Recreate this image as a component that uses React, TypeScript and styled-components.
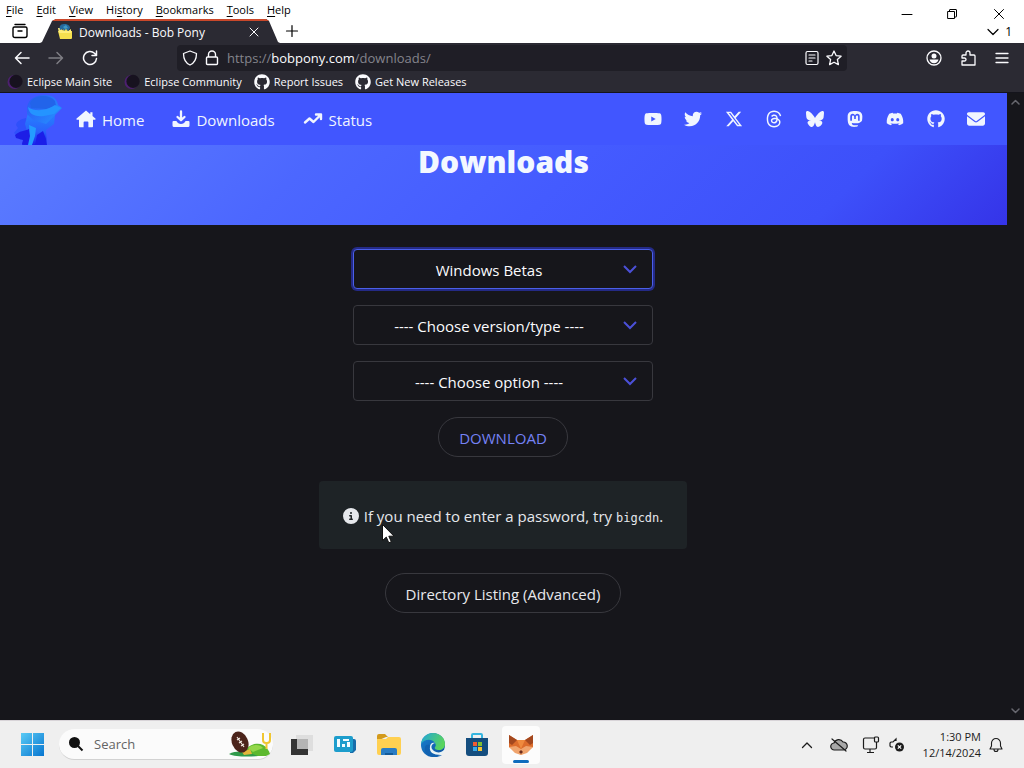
import React from "react";
import styled, { createGlobalStyle } from "styled-components";
import {
  FaYoutube,
  FaTwitter,
  FaXTwitter,
  FaThreads,
  FaBluesky,
  FaMastodon,
  FaDiscord,
  FaGithub,
  FaEnvelope,
  FaCircleInfo,
} from "react-icons/fa6";

const ui = '"Open Sans", "Noto Sans", "Segoe UI", sans-serif';

const GlobalStyle = createGlobalStyle`
  * { box-sizing: border-box; }
  body { margin: 0; background: #16161b; font-family: ${ui}; }
  button, input, select { font: inherit; color: inherit; }
  button { background: none; border: 0; padding: 0; }
  a { color: inherit; text-decoration: none; }
  svg { display: block; flex: none; }
`;

const Desktop = styled.div`
  min-height: 100vh;
  display: flex;
  flex-direction: column;
  color: #fbfbfe;
`;

/* ---------- browser chrome ---------- */

const TitleArea = styled.header`
  display: flex;
  justify-content: space-between;
  height: 43px;
  background: #fff;
  color: #000;
  font-size: 12px;
`;

const MenuBar = styled.nav`
  display: flex;
  gap: 1px;
  height: 19px;
  font-size: 11px;
`;

const MenuItem = styled.button`
  padding: 0 6px;
  line-height: 19px;
  u { text-underline-offset: 2px; }
`;

const TabStrip = styled.div`
  display: flex;
  align-items: center;
  height: 24px;
`;

const StripButton = styled.button<{ $w: number }>`
  width: ${(p) => p.$w}px;
  height: 24px;
  display: flex;
  align-items: center;
  justify-content: center;
`;

const Tab = styled.div`
  width: 240px;
  height: 24px;
  display: flex;
  align-items: center;
  padding: 0 18px 0 17px;
  gap: 6px;
  color: #fbfbfe;
  background: #2b2a33;
  border-top: 2px solid #c9482b;
  clip-path: polygon(0 100%, 2px 96%, 12px 8%, 16px 0, 226px 0, 229px 8%, 238px 96%, 100% 100%);
`;

const TabTitle = styled.span`
  flex: 1;
  white-space: nowrap;
`;

const WindowSide = styled.div`
  display: flex;
  flex-direction: column;
  align-items: flex-end;
`;

const WindowButtons = styled.div`
  display: flex;
`;

const WindowButton = styled.button`
  width: 45px;
  height: 28px;
  display: flex;
  align-items: center;
  justify-content: center;
  &:last-child { width: 50px; }
`;

const TabCount = styled.button`
  display: flex;
  align-items: center;
  gap: 6px;
  padding-right: 12px;
  line-height: 8px;
`;

const Toolbar = styled.div`
  display: flex;
  align-items: center;
  height: 30px;
  padding: 0 5px;
  background: #2b2a33;
`;

const ToolButton = styled.button<{ $dim?: boolean; $w?: number }>`
  width: ${(p) => p.$w ?? 34}px;
  height: 28px;
  display: flex;
  align-items: center;
  justify-content: center;
  opacity: ${(p) => (p.$dim ? 0.4 : 1)};
`;

const NavButtons = styled.div`
  display: flex;
  width: 172px;
`;

const AddressBar = styled.div`
  flex: 1;
  display: flex;
  align-items: center;
  height: 26px;
  padding: 0 2px;
  background: #1f1e26;
  border-radius: 4px;
`;

const AddressLabel = styled.label`
  margin-left: 4px;
  font-size: 13px;
  color: #84848c;
  b { font-weight: 400; color: #fbfbfe; }
`;

const AddressInput = styled.input`
  flex: 1;
  min-width: 0;
  border: 0;
  outline: 0;
  background: transparent;
`;

const ToolbarEnd = styled.div`
  display: flex;
  margin-left: 70px;
`;

const Bookmarks = styled.nav`
  display: flex;
  align-items: center;
  gap: 12px;
  height: 20px;
  padding: 0 7px 2px;
  background: #2b2a33;
  border-bottom: 1px solid #14141c;
  font-size: 11px;
`;

const Bookmark = styled.a`
  display: flex;
  align-items: center;
  gap: 4px;
  white-space: nowrap;
`;

/* ---------- web page ---------- */

const Viewport = styled.div`
  flex: 1;
  display: flex;
  background: #16161b;
`;

const Page = styled.div`
  flex: 1;
  min-width: 0;
`;

const ScrollTrack = styled.div`
  width: 17px;
  display: flex;
  flex-direction: column;
  justify-content: space-between;
  align-items: center;
  padding: 6px 0;
  color: #67676f;
`;

const SiteNav = styled.nav`
  display: flex;
  align-items: center;
  justify-content: space-between;
  height: 52px;
  padding: 0 22px 0 13px;
  background: #4156ff;
  color: #f0f5ff;
`;

const NavGroup = styled.div`
  display: flex;
  align-items: center;
  gap: 28px;
`;

const NavLink = styled.a`
  display: flex;
  align-items: center;
  gap: 6px;
  font-size: 15px;
  line-height: 24px;
  span { padding-top: 2px; }
`;

const Brand = styled.a`
  display: flex;
  margin-right: -15px;
`;

const Socials = styled.div`
  display: flex;
  justify-content: space-between;
  width: 341px;
`;

const Hero = styled.header`
  height: 80px;
  background: linear-gradient(135deg, #5b7cff 0%, #4c67ff 30%, #445bff 55%, #3d50fa 82%, #3534e8 100%);
  text-align: center;
`;

const HeroTitle = styled.h1`
  margin: 0;
  font-size: 30px;
  line-height: 34px;
  font-weight: 800;
  color: #f3f8ff;
`;

const Main = styled.main`
  display: flex;
  flex-direction: column;
  align-items: center;
  gap: 16px;
  padding: 24px 17px 24px 16px;
  font-size: 15px;
`;

const Picker = styled.div`
  position: relative;
  width: 300px;
  max-width: 100%;
`;

const PickerSelect = styled.select<{ $active?: boolean }>`
  appearance: none;
  display: block;
  width: 100%;
  height: 40px;
  padding: 2px 44px 0 16px;
  border: 1px solid ${(p) => (p.$active ? "#4a5fe8" : "#38383e")};
  border-radius: 4px;
  background: #16161b;
  box-shadow: ${(p) => (p.$active ? "0 0 0 2px #242a86" : "none")};
  text-align: center;
  text-align-last: center;
  outline: 0;
`;

const PickerArrow = styled.svg`
  position: absolute;
  right: 16px;
  top: 16px;
  pointer-events: none;
`;

const Pill = styled.button<{ $accent?: boolean }>`
  height: 40px;
  padding: 2px 20px 0;
  border: 1px solid #38383e;
  border-radius: 20px;
  color: ${(p) => (p.$accent ? "#7582f5" : "#e8e8ec")};
`;

const Notice = styled.p`
  display: flex;
  align-items: center;
  gap: 5px;
  height: 68px;
  margin: 8px 0;
  padding: 2px 24px 0;
  border-radius: 4px;
  background: #1e2326;
  color: #e6e8ec;
  code { font: 12px "DejaVu Sans Mono", "Liberation Mono", monospace; }
`;

const Pointer = styled.svg`
  position: absolute;
  left: 382px;
  top: 524px;
`;

/* ---------- taskbar ---------- */

const Taskbar = styled.footer`
  display: flex;
  align-items: center;
  justify-content: space-between;
  height: 48px;
  padding: 0 13px 0 20px;
  background: #efefef;
  border-top: 1px solid #d8d4d8;
  color: #1c1c1c;
`;

const TaskGroup = styled.div`
  display: flex;
  align-items: center;
`;

const SearchBox = styled.label`
  display: flex;
  align-items: center;
  gap: 10px;
  width: 214px;
  height: 31px;
  margin: 0 6px 0 15px;
  padding: 0 1px 0 9px;
  border-radius: 16px;
  background: #fbfbfb;
  border-bottom: 1px solid #d2d2d2;
  font-size: 13px;
`;

const SearchInput = styled.input`
  flex: 1;
  min-width: 0;
  border: 0;
  padding: 0;
  outline: 0;
  background: transparent;
  &::placeholder { color: #646464; opacity: 1; }
`;

const TaskButton = styled.button<{ $active?: boolean }>`
  position: relative;
  width: 38px;
  height: 38px;
  margin: 0 3px;
  display: flex;
  align-items: center;
  justify-content: center;
  border-radius: 4px;
  background: ${(p) => (p.$active ? "#fcfcfc" : "transparent")};
  &::after {
    content: "";
    display: ${(p) => (p.$active ? "block" : "none")};
    position: absolute;
    left: 11px;
    bottom: 1px;
    width: 16px;
    height: 3px;
    border-radius: 2px;
    background: #0f6cbd;
  }
`;

const TrayButton = styled.button<{ $w: number }>`
  width: ${(p) => p.$w}px;
  height: 32px;
  display: flex;
  align-items: center;
  justify-content: center;
`;

const Clock = styled.button`
  margin-left: 16px;
  font-size: 11px;
  line-height: 16px;
  text-align: right;
  time { display: block; }
`;

/* ---------- drawings ---------- */

type LineProps = { w: number; h?: number; d: string; sw?: number };

const Line = ({ w, h = w, d, sw = 1 }: LineProps) => (
  <svg
    width={w}
    height={h}
    viewBox={`0 0 ${w} ${h}`}
    fill="none"
    stroke="currentColor"
    strokeWidth={sw}
    strokeLinecap="round"
    strokeLinejoin="round"
  >
    <path d={d} />
  </svg>
);

const EclipseIcon = () => (
  <svg width="16" height="16" viewBox="0 0 16 16">
    <circle cx="7.500" cy="8" r="7" fill="#4d2070" />
    <circle cx="9" cy="7.400" r="6.600" fill="#17121f" />
  </svg>
);

const TabFavicon = () => (
  <svg width="16" height="16" viewBox="0 0 16 16">
    <path d="M1 7h4l1-2h4l1 2h4v7q0 1-1 1H3z" fill="#f5e04e" />
    <path d="M1 4h3l2 3h5l3-2v4H2z" fill="#ffee7a" />
    <path d="M3 6C2 3 3 0 7 0c4 0 6 2 6 4l-2 3-2-2-2 2-1-2z" fill="#256a9e" />
    <path d="M6 3l3-2 2 3-3 1z" fill="#3f98c4" />
  </svg>
);

const PonyLogo = () => (
  <svg width="50" height="52" viewBox="0 0 50 52">
    <defs>
      <linearGradient id="mane" x1="0" y1="0.2" x2="1" y2="0.8">
        <stop offset="0" stopColor="#2a5cf6" />
        <stop offset="1" stopColor="#2590ff" />
      </linearGradient>
      <linearGradient id="body" x1="0" y1="0" x2="0" y2="1">
        <stop offset="0" stopColor="#2584ff" />
        <stop offset="0.600" stopColor="#2a62fb" />
        <stop offset="1" stopColor="#1a1fec" />
      </linearGradient>
    </defs>
    <path d="M13 25c-5 1-9 3-10 7l2 3-4 5 5 4 1 3 8-1 4-10z" fill="#2f50fb" />
    <path d="M15 20c6-2 13 0 20-1l7 3-1 9-8 6 1 15H9l2-7 3-7-2-7z" fill="url(#body)" />
    <path d="M2 42c4-4 10-4 14-6l1 8v7H9l1-4-7-2z" fill="#1d1ee6" />
    <path d="M24 42l6-4 3 8v6H22z" fill="#1b1ee8" />
    <path d="M16 32l7 3-1 8-3 9h-4l2-9z" fill="#249cff" />
    <path d="M14 14C16 5 23 2 32 2c8 0 12 4 13 10l4 3-5 5-4 4-7 7-13-4-6-6z" fill="url(#mane)" />
    <path d="M17 10c3-8 19-10 25-2l1 5-10 3-15-1z" fill="#2264ea" />
    <path d="M15 14c7 5 18 4 27-2l6 3-7 6-10 2c-8 1-15-1-16-9z" fill="#2494ff" />
  </svg>
);

const HomeIcon = () => (
  <svg width="20" height="18" viewBox="0 0 20 18" fill="currentColor">
    <path d="M10 .5.6 8.600c-.6.6-.2 1.200.4 1.200h2v6.400c0 .6.4 1 1 1h3.600v-4.800c0-.5.3-.8.8-.8h3.200c.5 0 .8.3.8.8v4.800H16c.6 0 1-.4 1-1V9.800h2c.6 0 1-.6.4-1.200L16.500 6V2.200h-2.200v2z" />
  </svg>
);

const DownloadIcon = () => (
  <svg width="18" height="18" viewBox="0 0 18 18" fill="none" stroke="currentColor" strokeLinejoin="round" strokeLinecap="round">
    <path d="M9 1.500v8M5.500 7 9 10.200 12.500 7" strokeWidth="2.300" />
    <path d="M1.500 11h2.900c1 2 2.600 2.900 4.600 2.900s3.600-.9 4.600-2.900h2.900q1 0 1 1v3.500q0 1.500-1.500 1.500H2Q.5 17 .5 15.500V12q0-1 1-1z" fill="currentColor" stroke="none" />
  </svg>
);

const FootballArt = () => (
  <svg width="44" height="28" viewBox="0 0 44 28">
    <path d="M15 24c5-10 14-12 20-9 4 2 6 6 7 9l-4 2H14z" fill="#5cb82e" />
    <path d="M20 18c5-4 12-4 15 0l-10 4z" fill="#93d74a" />
    <path d="M1 24c6-3 14-3 21-1l8 3c-9 1-23 1-29-2z" fill="#2f9a4a" />
    <path d="M14 22l8-3 2 5-8 1z" fill="#e2b53a" />
    <path d="M35 3v7q0 3 3 3h1q3 0 3-3V3M38.500 13v6" fill="none" stroke="#f0c632" strokeWidth="2" />
    <ellipse cx="12" cy="12" rx="8" ry="11" fill="#4b241b" transform="rotate(-24 12 12)" />
    <path d="M9 7l7 10M9 10l3-2M11 13l3-2M13 16l3-2" stroke="#efe6de" strokeWidth="1.200" />
  </svg>
);

const WindowsLogo = () => (
  <svg width="24" height="24" viewBox="0 0 24 24">
    <defs>
      <linearGradient id="win" gradientUnits="userSpaceOnUse" x1="0" y1="0" x2="24" y2="24">
        <stop offset="0" stopColor="#5ccdf6" />
        <stop offset="1" stopColor="#0573cf" />
      </linearGradient>
    </defs>
    <path d="M1 0h11v11H1zM13 0h11v11H13zM1 12h11v11H1zM13 12h11v11H13z" fill="url(#win)" />
  </svg>
);

const TaskViewIcon = () => (
  <svg width="24" height="24" viewBox="0 0 24 24">
    <path d="M7 2h17v16H7z" fill="#dedede" />
    <path d="M2 6h17v16H2z" fill="#343434" />
    <path d="M8 6h11v10H8z" fill="#b4b4b4" />
  </svg>
);

const WidgetsIcon = () => (
  <svg width="24" height="24" viewBox="0 0 24 24">
    <path d="M17 6h4q2 0 2 2v9l-3 3h-3z" fill="#176caa" />
    <rect x="1" y="3" width="19" height="16" rx="2" fill="#1d9dcc" />
    <path d="M4 6h3v8H4zM9 11h3v3H9zM14 9h3v5h-3zM10 6h6v2h-6z" fill="#f2fcff" />
  </svg>
);

const FolderIcon = () => (
  <svg width="26" height="24" viewBox="0 0 26 24">
    <path d="M1 3q0-2 2-2h6l3 3h-2L1 8z" fill="#d39a1c" />
    <path d="M1 6h9l2-2h11q2 0 2 2v14q0 2-2 2H3q-2 0-2-2z" fill="#ffd051" />
    <path d="M5 22v-5q0-2 2-2h12q2 0 2 2v5z" fill="#2a7cc4" />
    <path d="M9 20h8v2H9z" fill="#145a98" />
  </svg>
);

const EdgeIcon = () => (
  <svg width="26" height="26" viewBox="0 0 26 26">
    <defs>
      <linearGradient id="edgeTop" x1="0" y1="0" x2="1" y2="0.400">
        <stop offset="0" stopColor="#1fa5dd" />
        <stop offset="1" stopColor="#5ad45c" />
      </linearGradient>
      <linearGradient id="edgeBase" x1="0" y1="0" x2="1" y2="1">
        <stop offset="0" stopColor="#1b83d3" />
        <stop offset="1" stopColor="#0c4f9c" />
      </linearGradient>
    </defs>
    <circle cx="13" cy="13" r="12" fill="url(#edgeBase)" />
    <path d="M1 12C2 5 7 1 13 1c7 0 12 5 12 11 0 4-3 6-6 6-3 0-5-1-4-3 1-1 1-2 0-4-3-5-11-4-14 1z" fill="url(#edgeTop)" />
    <path d="M15 11c-4 1-5 5-1 8 3 2 7 2 10-1l1 1-4 4C13 23 9 20 10 15c0-3 2-5 5-4z" fill="#e9f3f5" />
    <path d="M10 13c-3 6 2 12 12 10-8 5-18 0-17-7 0-3 2-4 5-3z" fill="#1262b1" />
  </svg>
);

const StoreIcon = () => (
  <svg width="24" height="26" viewBox="0 0 24 26">
    <path d="M7 7V3q0-1 1-1h8q1 0 1 1v4" fill="none" stroke="#35b5df" strokeWidth="2" />
    <path d="M1 6h22v15q0 3-3 3H4q-3 0-3-3z" fill="#144d7e" />
    <path d="M8 10h4v4H8z" fill="#ef5b32" />
    <path d="M13 10h4v4h-4z" fill="#80bf31" />
    <path d="M8 15h4v4H8z" fill="#37a9ea" />
    <path d="M13 15h4v4h-4z" fill="#f9c430" />
  </svg>
);

const FoxIcon = () => (
  <svg width="26" height="22" viewBox="0 0 26 22">
    <path d="M1 1l8 5h8l8-5v12l-12 8L1 13z" fill="#dc6c2c" />
    <path d="M1 1l8 5-5 5-3-2zM25 1l-8 5 5 5 3-2z" fill="#a3481f" />
    <path d="M1 13l7-1 5 3 5-3 7 1-6 6-6 2-6-2z" fill="#f0a46d" />
    <path d="M9 6h8l-4 9z" fill="#ef8a3e" />
    <path d="M11 18l2-2 2 2-2 2z" fill="#6d2c1c" />
  </svg>
);

const CloudOffIcon = () => (
  <svg width="18" height="14" viewBox="0 0 18 14" fill="#a8a8a8" stroke="#1c1c1c" strokeWidth="1.200" strokeLinecap="round">
    <path d="M4.500 12A3.500 3.500 0 0 1 4 5a5 5 0 0 1 9-1 4 4 0 0 1 .5 8z" />
    <path d="M2 1l14 12" />
  </svg>
);

const MonitorIcon = () => (
  <svg width="18" height="18" viewBox="0 0 18 18" fill="none" stroke="currentColor" strokeWidth="1.200">
    <path d="M12 2H3Q1.500 2 1.500 3.500v8Q1.500 13 3 13h10q1.500 0 1.500-1.500V8M8 13v3M5 16.500h7M14.500 8V6" />
    <rect x="12.500" y="1" width="4" height="5" rx="1" />
  </svg>
);

const MutedIcon = () => (
  <svg width="16" height="16" viewBox="0 0 16 16" fill="none" stroke="currentColor" strokeWidth="1.200">
    <path d="M7 4V2L4 5H2L1 6v3l1 1h2" />
    <circle cx="10.500" cy="10" r="4.500" fill="#1c1c1c" stroke="none" />
    <path d="M8.800 8.300l3.400 3.400M12.200 8.300l-3.400 3.400" stroke="#fff" />
  </svg>
);

const AccountIcon = () => (
  <svg width="16" height="16" viewBox="0 0 16 16">
    <circle cx="8" cy="8" r="7" fill="none" stroke="currentColor" strokeWidth="1.300" />
    <circle cx="8" cy="6" r="2.500" fill="currentColor" />
    <path d="M3.500 9.500h9c-.5 2.300-2.200 3.700-4.500 3.700s-4-1.400-4.500-3.700z" fill="currentColor" />
  </svg>
);

/* ---------- content ---------- */

const menus = ["File", "Edit", "View", "Hi|story", "Bookmarks", "Tools", "Help"];

const bookmarks = [
  { label: "Eclipse Main Site", icon: <EclipseIcon /> },
  { label: "Eclipse Community", icon: <EclipseIcon /> },
  { label: "Report Issues", icon: <FaGithub size={16} /> },
  { label: "Get New Releases", icon: <FaGithub size={16} /> },
];

const socials = [
  { label: "YouTube", Icon: FaYoutube },
  { label: "Twitter", Icon: FaTwitter },
  { label: "X", Icon: FaXTwitter },
  { label: "Threads", Icon: FaThreads },
  { label: "Bluesky", Icon: FaBluesky },
  { label: "Mastodon", Icon: FaMastodon },
  { label: "Discord", Icon: FaDiscord },
  { label: "GitHub", Icon: FaGithub },
  { label: "Email", Icon: FaEnvelope },
];

const pickers = [
  { label: "Category", value: "Windows Betas", active: true },
  { label: "Version or type", value: "---- Choose version/type ----" },
  { label: "Option", value: "---- Choose option ----" },
];

const apps = [
  { label: "Task view", icon: <TaskViewIcon /> },
  { label: "Widgets", icon: <WidgetsIcon /> },
  { label: "File Explorer", icon: <FolderIcon /> },
  { label: "Edge", icon: <EdgeIcon /> },
  { label: "Store", icon: <StoreIcon /> },
  { label: "Browser", icon: <FoxIcon />, active: true },
];

const MenuLabel = ({ text }: { text: string }) => {
  const [lead, rest] = text.includes("|") ? text.split("|") : ["", text];
  return (
    <>
      {lead}
      <u>{rest[0]}</u>
      {rest.slice(1)}
    </>
  );
};

export default function App() {
  return (
    <Desktop>
      <GlobalStyle />
      <TitleArea>
        <div>
          <MenuBar>
            {menus.map((m) => (
              <MenuItem key={m}>
                <MenuLabel text={m} />
              </MenuItem>
            ))}
          </MenuBar>
          <TabStrip>
            <StripButton $w={40} aria-label="Firefox View">
              <Line w={16} sw={1.4} d="M3 1.500h10M2.500 4h11q1.500 0 1.500 1.500v7q0 2-2 2H3q-2 0-2-2v-7Q1 4 2.500 4zM6 8h4" />
            </StripButton>
            <Tab>
              <TabFavicon />
              <TabTitle>Downloads - Bob Pony</TabTitle>
              <button aria-label="Close tab">
                <Line w={16} d="M4 4l8 8M12 4l-8 8" />
              </button>
            </Tab>
            <StripButton $w={24} aria-label="New tab">
              <Line w={14} sw={1.2} d="M7 1.500v11M1.500 7h11" />
            </StripButton>
          </TabStrip>
        </div>
        <WindowSide>
          <WindowButtons>
            <WindowButton aria-label="Minimize">
              <Line w={12} d="M1 6.500h10" />
            </WindowButton>
            <WindowButton aria-label="Restore">
              <Line w={12} d="M2 3.500h6.500v7H2zM3.500 3V2q0-.5.5-.5h6q.5 0 .5.5v6.500q0 .5-.5.500H9" />
            </WindowButton>
            <WindowButton aria-label="Close">
              <Line w={12} d="M1.500 1.500l9 9M10.500 1.500l-9 9" />
            </WindowButton>
          </WindowButtons>
          <TabCount aria-label="List all tabs">
            <Line w={12} h={8} sw={1.2} d="M1 1.500l5 5 5-5" />
            <span>1</span>
          </TabCount>
        </WindowSide>
      </TitleArea>

      <Toolbar>
        <NavButtons>
          <ToolButton aria-label="Back">
            <Line w={16} sw={1.5} d="M15 8H1.500M7 2.500L1.500 8 7 13.500" />
          </ToolButton>
          <ToolButton aria-label="Forward" $dim>
            <Line w={16} sw={1.5} d="M1 8h13.500M9 2.500L14.500 8 9 13.500" />
          </ToolButton>
          <ToolButton aria-label="Reload">
            <Line w={16} sw={1.5} d="M14.500 8.500A6.500 6.500 0 1 1 12.500 3.300L14.500 5.500M14.500 1v4.500H10" />
          </ToolButton>
        </NavButtons>
        <AddressBar>
          <ToolButton $w={22} aria-label="Tracking protection">
            <Line w={16} sw={1.3} d="M8 1l6.500 2.500c0 6-2 9.500-6.500 11.500C3.500 13 1.500 9.500 1.500 3.500z" />
          </ToolButton>
          <ToolButton $w={22} aria-label="Site security">
            <Line w={16} sw={1.4} d="M4.500 7V4.500a3.500 3.500 0 0 1 7 0V7M3.500 7h9q1 0 1 1v5.500q0 1-1 1h-9q-1 0-1-1V8q0-1 1-1z" />
          </ToolButton>
          <AddressLabel htmlFor="address">
            https://<b>bobpony.com</b>/downloads/
          </AddressLabel>
          <AddressInput id="address" />
          <ToolButton $w={22} aria-label="Reader view">
            <Line w={16} sw={1.2} d="M3.500 1.500h9q1.500 0 1.500 1.500v10q0 1.500-1.500 1.500h-9Q2 14.500 2 13V3q0-1.500 1.500-1.500zM5 5h6M5 8h6M5 11h3" />
          </ToolButton>
          <ToolButton $w={22} aria-label="Bookmark this page">
            <Line w={16} sw={1.3} d="M8 1l2.100 4.600 5 .6-3.700 3.400 1 5L8 12.200l-4.400 2.400 1-5L.9 6.200l5-.6z" />
          </ToolButton>
        </AddressBar>
        <ToolbarEnd>
          <ToolButton aria-label="Account">
            <AccountIcon />
          </ToolButton>
          <ToolButton aria-label="Extensions">
            <Line w={16} sw={1.3} d="M3 5h3V3a2 2 0 0 1 4 0v2h4q1 0 1 1v9H2v-4h2.500a1.500 1.500 0 0 0 0-3H2V6q0-1 1-1z" />
          </ToolButton>
          <ToolButton aria-label="Menu">
            <Line w={14} sw={1.3} d="M1 2.500h12M1 7h12M1 11.500h12" />
          </ToolButton>
        </ToolbarEnd>
      </Toolbar>

      <Bookmarks>
        {bookmarks.map((b) => (
          <Bookmark key={b.label} href="#">
            {b.icon}
            {b.label}
          </Bookmark>
        ))}
      </Bookmarks>

      <Viewport>
        <Page>
          <SiteNav>
            <NavGroup>
              <Brand href="#" aria-label="Bob Pony">
                <PonyLogo />
              </Brand>
              <NavLink href="#">
                <HomeIcon />
                <span>Home</span>
              </NavLink>
              <NavLink href="#">
                <DownloadIcon />
                <span>Downloads</span>
              </NavLink>
              <NavLink href="#">
                <Line w={20} h={18} sw={2.4} d="M2 12.500l4.500-4 4 3.500 6-6M13 4.500h5v4.500" />
                <span>Status</span>
              </NavLink>
            </NavGroup>
            <Socials>
              {socials.map(({ label, Icon }) => (
                <a key={label} href="#" aria-label={label}>
                  <Icon size={18} />
                </a>
              ))}
            </Socials>
          </SiteNav>
          <Hero>
            <HeroTitle>Downloads</HeroTitle>
          </Hero>
          <Main>
            {pickers.map((p) => (
              <Picker key={p.label}>
                <PickerSelect aria-label={p.label} $active={p.active}>
                  <option>{p.value}</option>
                </PickerSelect>
                <PickerArrow width="14" height="9" viewBox="0 0 14 9" fill="none" stroke="#4b50d8" strokeWidth="2">
                  <path d="M1 1l6 6 6-6" />
                </PickerArrow>
              </Picker>
            ))}
            <Pill $accent>DOWNLOAD</Pill>
            <Notice>
              <FaCircleInfo size={16} />
              <span>
                If you need to enter a password, try <code>bigcdn</code>.
              </span>
            </Notice>
            <Pill>Directory Listing (Advanced)</Pill>
          </Main>
        </Page>
        <ScrollTrack>
          <Line w={9} h={6} sw={1.5} d="M1 5l3.500-3.500L8 5" />
          <Line w={9} h={6} sw={1.5} d="M1 1l3.500 3.500L8 1" />
        </ScrollTrack>
      </Viewport>

      <Taskbar>
        <TaskGroup>
          <button aria-label="Start">
            <WindowsLogo />
          </button>
          <SearchBox>
            <svg width="16" height="16" viewBox="0 0 16 16">
              <circle cx="6.500" cy="6.500" r="5.500" fill="#111" />
              <path d="M10 10l4.500 4.500" stroke="#111" strokeWidth="2" />
            </svg>
            <SearchInput aria-label="Search" placeholder="Search" />
            <FootballArt />
          </SearchBox>
          {apps.map((a) => (
            <TaskButton key={a.label} aria-label={a.label} $active={a.active}>
              {a.icon}
            </TaskButton>
          ))}
        </TaskGroup>
        <TaskGroup>
          <TrayButton $w={32} aria-label="Hidden icons">
            <Line w={12} h={8} sw={1.3} d="M1.500 6.500L6 2l4.500 4.500" />
          </TrayButton>
          <TrayButton $w={32} aria-label="OneDrive">
            <CloudOffIcon />
          </TrayButton>
          <TrayButton $w={32} aria-label="Network">
            <MonitorIcon />
          </TrayButton>
          <TrayButton $w={20} aria-label="Volume">
            <MutedIcon />
          </TrayButton>
          <Clock>
            <time>1:30 PM</time>
            <time>12/14/2024</time>
          </Clock>
          <TrayButton $w={30} aria-label="Notifications">
            <Line w={14} h={16} sw={1.1} d="M1 12h12l-1.500-3V6a4.500 4.500 0 0 0-9 0v3zM5 12.500a2 2 0 0 0 4 0" />
          </TrayButton>
        </TaskGroup>
      </Taskbar>

      <Pointer width="12" height="20" viewBox="0 0 12 20">
        <path d="M.5.500v16l3.800-3.400 2.500 5.700 2.500-1.100-2.500-5.500H12z" fill="#fff" stroke="#111" strokeWidth="1" />
      </Pointer>
    </Desktop>
  );
}
